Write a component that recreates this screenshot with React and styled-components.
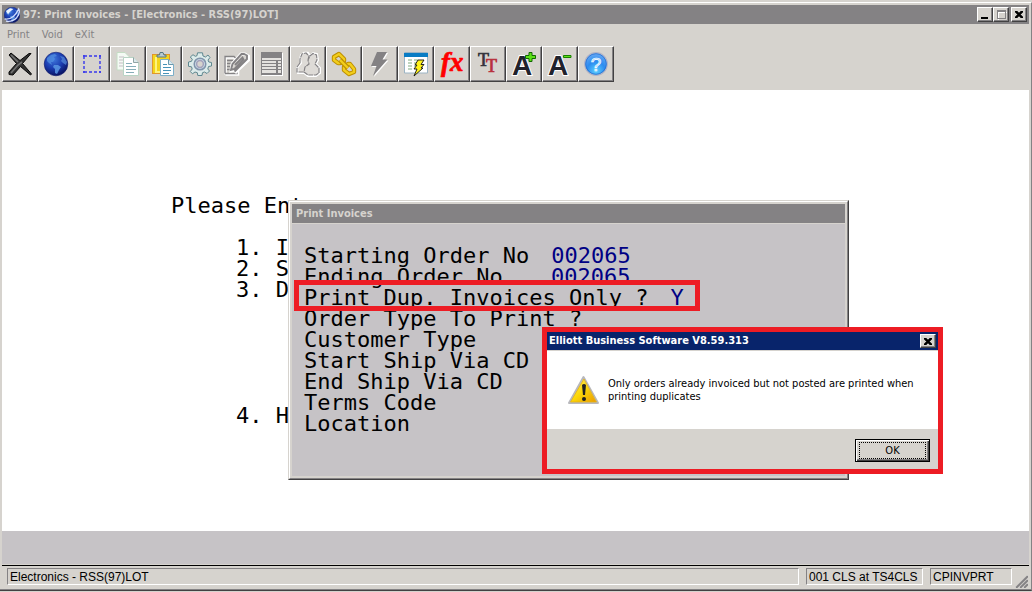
import { useState } from 'react';
import styled, { createGlobalStyle, css } from 'styled-components';

const FACE = '#d6d3ce';
const SHADOW = '#848284';
const DARK = '#424142';
const PANEL = '#c6c3c6';
const NAVY = '#08246b';
const RED = '#ed1c24';
const UI_FONT = '"DejaVu Sans Condensed", "DejaVu Sans", sans-serif';
const MONO_FONT = '"DejaVu Sans Mono", monospace';

const GlobalStyle = createGlobalStyle`
  * {
    box-sizing: border-box;
  }

  body {
    margin: 0;
    background: ${FACE};
    font-family: ${UI_FONT};
    font-size: 11px;
  }

  button,
  input {
    margin: 0;
    padding: 0;
    font: inherit;
    color: inherit;
  }
`;

const raised = css`
  border: 1px solid;
  border-color: #fff ${DARK} ${DARK} #fff;
  box-shadow: inset -1px -1px 0 ${SHADOW};
`;

const Window = styled.div`
  display: flex;
  flex-direction: column;
  min-height: 100vh;
  padding: 2px 0 1px;
  background: ${FACE};
`;

const Frame = styled.div`
  flex: 1;
  display: flex;
  flex-direction: column;
  padding: 2px 2px 0 2px;
  border-top: 1px solid #fff;
  border-right: 1px solid ${SHADOW};
  border-bottom: 1px solid ${DARK};
  box-shadow: inset 0 -1px 0 ${SHADOW};
`;

const TitleBar = styled.header`
  display: flex;
  align-items: center;
  height: ${({ $height }) => $height || 19}px;
  padding: 0 2px;
  background: ${({ $active }) => ($active ? NAVY : SHADOW)};
  color: ${({ $active }) => ($active ? '#fff' : FACE)};
`;

const Title = styled.h1`
  flex: 1;
  margin: 0 0 0 ${({ $indent }) => $indent || 0}px;
  font-size: 11px;
  font-weight: bold;
  line-height: 18px;
  white-space: nowrap;
`;

const CaptionButton = styled.button`
  ${raised}
  display: flex;
  align-items: center;
  justify-content: center;
  width: 16px;
  height: ${({ $height }) => $height || 15}px;
  margin-left: ${({ $apart }) => ($apart ? 2 : 0)}px;
  background: ${FACE};
`;

const MenuBar = styled.nav`
  display: flex;
  align-items: center;
  gap: 12px;
  height: 22px;
  padding: 0 5px 2px;
`;

const MenuItem = styled.button`
  border: 0;
  background: none;
  color: ${SHADOW};
`;

const Toolbar = styled.div`
  display: flex;
  padding-bottom: 8px;
`;

const ToolButton = styled.button`
  ${raised}
  display: flex;
  align-items: center;
  justify-content: center;
  width: 36px;
  height: 36px;
  background: ${FACE};
`;

const Workspace = styled.main`
  position: relative;
  flex: 1;
  padding: 105px 169px 0;
  background: #fff;
  font-family: ${MONO_FONT};
  font-size: 22px;
  line-height: 21px;
`;

const Prompt = styled.p`
  margin: 0 0 21px;
`;

const Steps = styled.div`
  padding-left: 65px;
`;

const Step = styled.div`
  margin-top: ${({ $gap }) => $gap || 0}px;
`;

const Dialog = styled.section`
  position: absolute;
  top: 110px;
  left: 286px;
  width: 561px;
  border: 1px solid;
  border-color: ${FACE} ${DARK} ${DARK} ${FACE};
  font-family: ${UI_FONT};
`;

const DialogInner = styled.div`
  padding: 2px;
  border: 1px solid;
  border-color: #fff ${SHADOW} ${SHADOW} #fff;
  background: ${FACE};
`;

const Form = styled.form`
  margin-top: 1px;
  padding: 21px 12px 42px;
  background: ${PANEL};
  font-family: ${MONO_FONT};
`;

const Field = styled.div`
  display: flex;
  gap: 22px;
  height: 21px;
`;

const FieldLabel = styled.label`
  min-width: 225px;
  white-space: nowrap;
`;

const FieldInput = styled.input`
  width: 8ch;
  height: 21px;
  border: 0;
  outline: 0;
  background: none;
  color: #000084;
`;

const Highlight = styled.div`
  position: absolute;
  top: 190px;
  left: 292px;
  width: 406px;
  height: 31px;
  border: 5px solid ${RED};
  pointer-events: none;
`;

const Alert = styled.section`
  position: absolute;
  top: 237px;
  left: 540px;
  width: 401px;
  border: 5px solid ${RED};
  background: ${FACE};
  font-family: ${UI_FONT};
  font-size: 11px;
`;

const AlertBody = styled.div`
  display: flex;
  align-items: center;
  gap: 8px;
  height: 78px;
  margin-top: 1px;
  padding: 0 21px;
  background: #fff;
`;

const AlertText = styled.p`
  flex: 1;
  margin: 0;
  line-height: 13px;
`;

const AlertFooter = styled.div`
  display: flex;
  justify-content: flex-end;
  padding: 10px 8px 7px;
`;

const OkButton = styled.button`
  width: 75px;
  height: 23px;
  padding: 2px;
  border: 1px solid #000;
  background: ${FACE};
  box-shadow: inset 1px 1px 0 #fff, inset -1px -1px 0 ${DARK}, inset -2px -2px 0 ${SHADOW};
`;

const FocusRing = styled.span`
  display: block;
  margin: 0 1px;
  border: 1px dotted #000;
  line-height: 15px;
`;

const MessageStrip = styled.div`
  height: 34px;
  border-bottom: 1px solid ${FACE};
  background: ${PANEL};
`;

const StatusBar = styled.footer`
  display: flex;
  gap: 7px;
  padding: 2px 1px 5px 5px;
  border-top: 1px solid #000;
  font-family: "Liberation Sans", Arial, sans-serif;
  font-size: 12px;
  line-height: 16px;
`;

const StatusCell = styled.div`
  flex: ${({ $width }) => ($width ? `0 0 ${$width}px` : 1)};
  height: 17px;
  padding-left: 2px;
  border: 1px solid;
  border-color: ${SHADOW} #fff #fff ${SHADOW};
  white-space: nowrap;
`;

const Grip = styled.svg`
  align-self: flex-end;
  margin: 0 0 -3px -4px;
`;

const GlobeArt = () => (
  <>
    <defs>
      <radialGradient id="globe" cx="0.4" cy="0.3" r="0.7">
        <stop offset="0" stopColor="#3f78dc" />
        <stop offset="0.55" stopColor="#1a3cb0" />
        <stop offset="1" stopColor="#0a1464" />
      </radialGradient>
    </defs>
    <circle cx="12" cy="12" r="11.8" fill="url(#globe)" stroke="#101c6c" strokeWidth="0.6" />
    <path d="M3 6 L7 3 L11 2 L13 4 L10 5 L11 7 L9 10 L7 10 L8 13 L5 11 L3 9Z" fill="#4f8ce0" opacity="0.8" />
    <path d="M10 13 L14 13 L17 15 L15 18 L13 22 L11 21 L11 17 L9 15Z" fill="#5a98e4" opacity="0.85" />
    <path d="M16 4 L20 5 L23 10 L22 13 L19 11 L17 9 L18 7Z" fill="#4f82d4" opacity="0.8" />
  </>
);

const BOLT = 'M9 0 H19 L14.5 7.5 H19.5 L5 24 L8.5 14 H3Z';

const tools = [
  {
    label: 'Close',
    art: (
      <>
        <path d="M3 1 L12 8.5 L21 1.5 L23 1.5 L14.5 11.5 L23.5 22 L22.5 23 L12.5 14.5 L5 23 L1 22.5 L1 20 L8.5 11.5 L1 3Z" fill="#333" stroke="#080808" />
        <path d="M3 3 L10 10 M3 21 L10 13 L14 10" stroke="#737373" strokeWidth="1.6" fill="none" />
      </>
    ),
  },
  { label: 'Web', art: <GlobeArt /> },
  {
    label: 'Select',
    art: (
      <path
        d="M3 4 H7 M9 4 H12 M14 4 H17 M19 4 H21 M3 20 H7 M9 20 H12 M14 20 H17 M19 20 H21 M4 3 V7 M4 9 V12 M4 14 V17 M4 19 V21 M20 3 V7 M20 9 V12 M20 14 V17 M20 19 V21"
        stroke="#3838ec"
        strokeWidth="1.4"
      />
    ),
  },
  {
    label: 'Copy',
    art: (
      <>
        <path d="M1 0.5 H9 L13 4.5 V18 H1Z" fill="#f4faf4" stroke="#c4dcc4" />
        <path d="M3 5 H8 M3 8 H10 M3 11 H10 M3 14 H7" stroke="#c4bcc4" />
        <path d="M7.5 5.5 H17.5 L22.5 10.5 V23.5 H7.5Z" fill="#fff" stroke="#b8d4c4" />
        <path d="M17.5 5.5 V10.5 H22.5" fill="#dce8ec" stroke="#90a4a4" />
        <path d="M10 11.5 H16 M10 14.5 H20 M10 17.5 H20 M10 20.5 H18" stroke="#86adb8" />
      </>
    ),
  },
  {
    label: 'Paste',
    art: (
      <>
        <rect x="0.5" y="2.5" width="17" height="19" fill="#f3d51a" stroke="#e0962c" />
        <path d="M4 5 V20 H9" stroke="#fff37c" strokeWidth="2" fill="none" />
        <path d="M5 5 V3 H7.5 L8 0.5 H11 L12 3 H14 V5Z" fill="#b9cbd1" stroke="#567783" />
        <path d="M8.5 7.5 H16.5 L21.5 12.5 V23.5 H8.5Z" fill="#fff" stroke="#7cafc8" />
        <path d="M16.5 7.5 V12.5 H21.5" fill="#dceaf0" stroke="#6998ac" />
        <path d="M11 12.5 H15 M11 15.5 H19 M11 18.5 H19 M11 21.5 H17" stroke="#4793b8" />
      </>
    ),
  },
  {
    label: 'Settings',
    art: (
      <>
        <path d="M9.5 0.8 H14.5 L15 4 L17.5 5 L20 3 L22 5.5 L20 8 L20.8 10 L23.5 10.5 V14 L20.5 14.5 L19.8 17 L21.5 19 L19 21.5 L16.5 20 L14.5 20.7 L14 23.5 H9.8 L9.3 20.7 L7 20 L4.5 21.8 L2.3 19.5 L4.2 17 L3.5 14.8 L0.5 14.3 V10 L3.5 9.3 L4.3 7.3 L2.3 5 L5 2.7 L7.3 4.3 L9 3.7Z" fill="#dcebea" stroke="#5f8890" />
        <circle cx="12" cy="12" r="5.8" fill="#c7d9e2" stroke="#8194ac" strokeWidth="1.5" />
        <circle cx="12" cy="12" r="3.4" fill="#d6d3ce" stroke="#a3a1bc" strokeWidth="1.5" />
      </>
    ),
  },
  {
    label: 'Edit note',
    art: (
      <>
        <path d="M1.5 22.5 V5.5 H10 L13 9 M1.5 22.5 H14 V19" stroke="#fff" strokeWidth="2.6" fill="none" />
        <path d="M1 21.5 V4.5 H10 L13 7.5 M1 21.5 H13 V18 M3 8.5 H9 M3 11.5 H9 M3 14.5 H7 M3 17.5 H6" stroke="#848284" fill="none" strokeWidth="1.4" />
        <path d="M11 21 L24.5 8 V4 L21 2 H17 L8 12 L7 19 L11 18.5 L20 9" stroke="#fff" strokeWidth="3" fill="none" />
        <path d="M10.5 19.5 L23 7 V3.5 L20 2 H17.5 L8.5 12 L7 18 L10.5 17 L19.5 7.5 L18.5 5.5 L11 13" stroke="#848284" strokeWidth="1.9" fill="none" />
      </>
    ),
  },
  {
    label: 'List',
    art: (
      <>
        <path d="M2 1 H23 V24 H2Z" fill="#fff" />
        <path d="M1 0 H22 V23 H1Z" fill="#848284" />
        <path d="M2 6 H21 V8 H2Z M2 9 H16 V11 H2Z M2 12 H16 V14 H2Z M2 15 H16 V17 H2Z M2 18 H16 V21 H2Z M18 9 H21 V11 H18Z M18 12 H21 V14 H18Z M18 15 H21 V17 H18Z M18 18 H21 V21 H18Z" fill="#e4e2df" />
      </>
    ),
  },
  {
    label: 'Users',
    art: (
      <>
        <path d="M5 3 L8 0.8 H12 L14 4 L17 1 L21 2 L22 8 L20 12 L24 16 V21 L20 24 H12 L8 21 H2 L1 16 L5 11 L4 7Z" fill="#dedbd7" stroke="#fff" strokeWidth="2" />
        <path d="M4 11 L4 7 L6 2 L10 1 L13 4 L12 8 M4 11 L1 15 V20 H8 M14 4 L17 1.5 L20.5 3 L21 8 L19 12 L23 16 V21 L20 23 H12 L8 20 L9 15 L13 12 L12 8Z" fill="none" stroke="#848284" strokeWidth="1.2" strokeDasharray="5 0.7" />
      </>
    ),
  },
  {
    label: 'Link',
    art: (
      <g fill="none" strokeLinejoin="round">
        <path d="M2 5 L7 2 L12 7 V9 L8 11 H6 L2 8Z M12 15 L16 12 H18 L22 17 V20 L17 22 L12 18Z" stroke="#bd8e00" strokeWidth="4.4" />
        <path d="M2 5 L7 2 L12 7 V9 L8 11 H6 L2 8Z M12 15 L16 12 H18 L22 17 V20 L17 22 L12 18Z" stroke="#f2ce1c" strokeWidth="2.4" />
        <path d="M8 8 L16 16" stroke="#bd8e00" strokeWidth="4.6" />
        <path d="M8 8 L16 16" stroke="#f2ce1c" strokeWidth="2.4" />
      </g>
    ),
  },
  {
    label: 'Run',
    art: (
      <>
        <path d={BOLT} transform="translate(1 1)" fill="#fff" />
        <path d={BOLT} fill="#848284" />
      </>
    ),
  },
  {
    label: 'Run form',
    art: (
      <>
        <path d="M0.5 0.5 H23.5 V21 H0.5Z" fill="#fff" stroke="#9cb4c4" />
        <path d="M0 1 H24 V5 H0Z" fill="#087cc4" />
        <path d="M4 8 H8 M4 11 H8 M4 14 H8 M4 17 H8 M10 8 H14 M10 11 H12 M10 14 H12" stroke="#a9c8a9" strokeWidth="1.4" />
        <path d="M14 8 H20 L17 12.5 H20 L17 16 H19 L10 24 L13 17 H10 L13 13 H11Z" fill="#fff31a" stroke="#111" strokeWidth="0.9" />
      </>
    ),
  },
  {
    label: 'Functions',
    art: (
      <text x="1" y="19" fontFamily="Liberation Serif, serif" fontSize="27" fontWeight="bold" fontStyle="italic" fill="#f00" stroke="#f00" strokeWidth="0.7">fx</text>
    ),
  },
  {
    label: 'Font',
    art: (
      <g fontFamily="Liberation Serif, serif" fontSize="18">
        <text x="2" y="14" fill="#34343c" stroke="#34343c" strokeWidth="0.7">T</text>
        <text x="10" y="20" fill="#b8303c" stroke="#b8303c" strokeWidth="0.7">T</text>
      </g>
    ),
  },
  {
    label: 'Larger text',
    art: (
      <>
        <text x="0" y="23" fontFamily="Liberation Sans, sans-serif" fontSize="28" fontWeight="bold" fill="#20222c" stroke="#fff" strokeWidth="2" paintOrder="stroke">A</text>
        <path d="M17 0.5 H20 V3.5 H23.5 V6.5 H20 V9.5 H17 V6.5 H13.5 V3.5 H17Z" fill="#5ce018" stroke="#126800" />
      </>
    ),
  },
  {
    label: 'Smaller text',
    art: (
      <>
        <text x="0" y="23" fontFamily="Liberation Sans, sans-serif" fontSize="28" fontWeight="bold" fill="#20222c" stroke="#fff" strokeWidth="2" paintOrder="stroke">A</text>
        <path d="M15.5 3.5 H23 V5.5 H15.5Z" fill="#5ce018" stroke="#188000" />
      </>
    ),
  },
  {
    label: 'Help',
    art: (
      <>
        <defs>
          <radialGradient id="help" cx="0.5" cy="0.8" r="0.8">
            <stop offset="0" stopColor="#5cd0ff" />
            <stop offset="0.5" stopColor="#2c8cf0" />
            <stop offset="1" stopColor="#6cacf4" />
          </radialGradient>
        </defs>
        <circle cx="12" cy="12" r="11.3" fill="url(#help)" stroke="#b4b4c4" strokeWidth="1.2" />
        <circle cx="12" cy="12" r="10.3" fill="none" stroke="#2468cc" strokeWidth="0.7" />
        <text x="12" y="18.5" textAnchor="middle" fontFamily="Liberation Sans, sans-serif" fontSize="19" fill="#9cd0ff" stroke="#fff" strokeWidth="0.7">?</text>
      </>
    ),
  },
];

const AppIcon = () => (
  <svg width="16" height="16" viewBox="0 0 24 24" aria-hidden="true">
    <GlobeArt />
    <path d="M3 6 L9 2 L14 3 L9 7 L6 11Z" fill="#eaf2ff" />
    <path d="M1 18 Q14 20 22 3 Q25 9 19 16 Q12 23 3 21" fill="none" stroke="#d4e0ff" strokeWidth="2" />
  </svg>
);

const CloseGlyph = () => (
  <svg width="8" height="7" viewBox="0 0 8 7" aria-hidden="true">
    <path d="M0 0H2L4 2L6 0H8V1L5.5 3.5L8 6V7H6L4 5L2 7H0V6L2.5 3.5L0 1Z" stroke="#000" strokeWidth="0.5" />
  </svg>
);

const WarningIcon = () => (
  <svg width="32" height="32" viewBox="0 0 32 32" aria-hidden="true">
    <defs>
      <linearGradient id="warning" x1="0" y1="0" x2="1" y2="1">
        <stop offset="0" stopColor="#fff48c" />
        <stop offset="0.5" stopColor="#fcd808" />
        <stop offset="1" stopColor="#e89400" />
      </linearGradient>
    </defs>
    <path d="M15.5 3 L30 29 H1Z" fill="url(#warning)" stroke="#b8b8bc" strokeWidth="2" strokeLinejoin="round" />
    <path d="M16 5 L28.5 28 H2.5Z" fill="none" stroke="#e8b410" strokeWidth="0.8" />
    <path d="M14 11 Q16 9 18 11 L17 21 H15Z" fill="#222" />
    <circle cx="16" cy="25" r="2" fill="#222" />
  </svg>
);

const fields = [
  { id: 'startOrder', label: 'Starting Order No', value: '002065' },
  { id: 'endOrder', label: 'Ending Order No', value: '002065' },
  { id: 'dupOnly', label: 'Print Dup. Invoices Only ?', value: 'Y' },
  { id: 'orderType', label: 'Order Type To Print ?' },
  { id: 'customerType', label: 'Customer Type' },
  { id: 'startShip', label: 'Start Ship Via CD' },
  { id: 'endShip', label: 'End Ship Via CD' },
  { id: 'terms', label: 'Terms Code' },
  { id: 'location', label: 'Location' },
];

const PrintInvoicesDialog = () => {
  const [values, setValues] = useState(
    Object.fromEntries(fields.map(({ id, value }) => [id, value || '']))
  );

  const handleChange = (event) => {
    setValues({ ...values, [event.target.id]: event.target.value });
  };

  return (
    <Dialog>
      <DialogInner>
        <TitleBar>
          <Title as="h2" $indent={2}>Print Invoices</Title>
        </TitleBar>
        <Form>
          {fields.map(({ id, label }) => (
            <Field key={id}>
              <FieldLabel htmlFor={id}>{label}</FieldLabel>
              <FieldInput id={id} value={values[id]} onChange={handleChange} />
            </Field>
          ))}
        </Form>
      </DialogInner>
    </Dialog>
  );
};

const DuplicatesAlert = ({ onClose }) => (
  <Alert role="alertdialog" aria-labelledby="alert-title">
    <TitleBar $active $height={18}>
      <Title as="h2" id="alert-title">Elliott Business Software V8.59.313</Title>
      <CaptionButton $height={14} aria-label="Close message" onClick={onClose}>
        <CloseGlyph />
      </CaptionButton>
    </TitleBar>
    <AlertBody>
      <WarningIcon />
      <AlertText>Only orders already invoiced but not posted are printed when printing duplicates</AlertText>
    </AlertBody>
    <AlertFooter>
      <OkButton onClick={onClose}>
        <FocusRing>OK</FocusRing>
      </OkButton>
    </AlertFooter>
  </Alert>
);

const App = () => {
  const [alertOpen, setAlertOpen] = useState(true);

  return (
    <>
      <GlobalStyle />
      <Window>
        <Frame>
          <TitleBar>
            <AppIcon />
            <Title $indent={3}>97: Print Invoices - [Electronics - RSS(97)LOT]</Title>
            <CaptionButton aria-label="Minimize">
              <svg width="8" height="8" aria-hidden="true">
                <path d="M0 6h7v2h-7z" />
              </svg>
            </CaptionButton>
            <CaptionButton aria-label="Maximize">
              <svg width="11" height="11" fill="none" shapeRendering="crispEdges" aria-hidden="true">
                <path d="M1 2h9v8h-9z" transform="translate(1 1)" stroke="#fff" />
                <path d="M1 1h8v8h-8z M1 2h8" stroke={SHADOW} />
              </svg>
            </CaptionButton>
            <CaptionButton $apart aria-label="Close">
              <CloseGlyph />
            </CaptionButton>
          </TitleBar>
          <MenuBar>
            <MenuItem>Print</MenuItem>
            <MenuItem>Void</MenuItem>
            <MenuItem>eXit</MenuItem>
          </MenuBar>
          <Toolbar role="toolbar">
            {tools.map(({ label, art }) => (
              <ToolButton key={label} aria-label={label}>
                <svg width="24" height="24" viewBox="0 0 24 24" overflow="visible" aria-hidden="true">
                  {art}
                </svg>
              </ToolButton>
            ))}
          </Toolbar>
          <Workspace>
            <Prompt>Please Ent</Prompt>
            <Steps>
              <Step>1. I</Step>
              <Step>2. S</Step>
              <Step>3. D</Step>
              <Step $gap={105}>4. H</Step>
            </Steps>
            <PrintInvoicesDialog />
            <Highlight />
            {alertOpen && <DuplicatesAlert onClose={() => setAlertOpen(false)} />}
          </Workspace>
          <MessageStrip />
          <StatusBar>
            <StatusCell>Electronics - RSS(97)LOT</StatusCell>
            <StatusCell $width={117}>001 CLS at TS4CLS</StatusCell>
            <StatusCell $width={82}>CPINVPRT</StatusCell>
            <Grip width="13" height="13" aria-hidden="true">
              <path d="M0 13L13 0M4 13L13 4M8 13L13 8" stroke="#fff" strokeWidth="1" />
              <path d="M1 13L13 1M5 13L13 5M9 13L13 9" stroke={SHADOW} strokeWidth="2" />
            </Grip>
          </StatusBar>
        </Frame>
      </Window>
    </>
  );
};

export default App;
